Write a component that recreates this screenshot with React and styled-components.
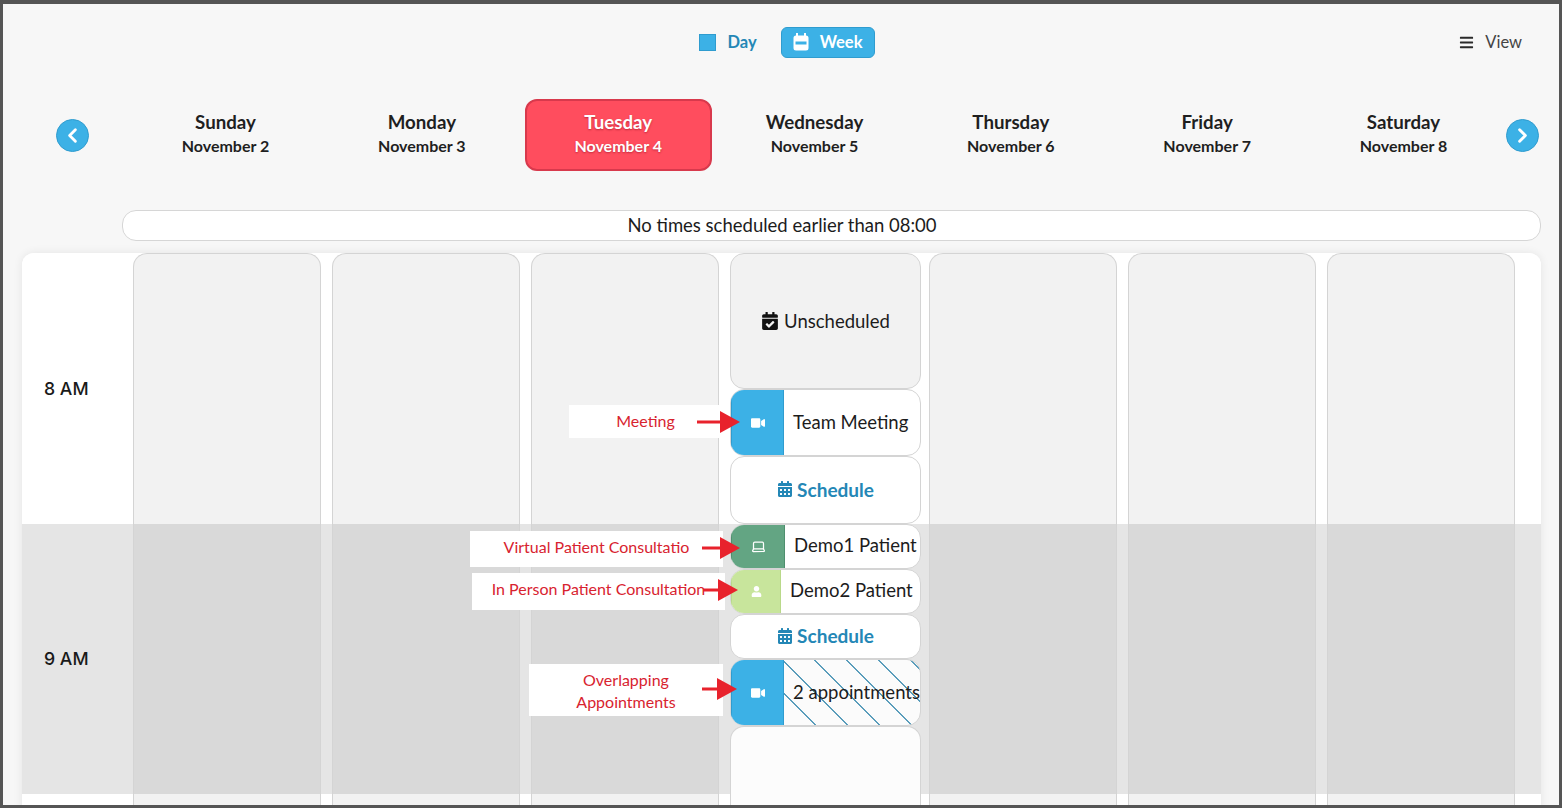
import React from 'react'
import styled, { createGlobalStyle } from 'styled-components'
import { FaCalendarAlt, FaCalendarCheck, FaVideo, FaUser, FaBars } from 'react-icons/fa'
import { ChevronLeft, ChevronRight, Laptop } from 'lucide-react'

const blue = '#3cb1e6'
const blueEdge = '#2f9ccf'
const link = '#2487b6'
const sans = '"Lato", "Noto Sans", sans-serif'

const GlobalStyle = createGlobalStyle`
  html, body { margin: 0; padding: 0; background: #f7f7f7; }
  body { font-family: ${sans}; color: #1c1c1c; overflow: hidden; }
  * { box-sizing: border-box; }
`

const Frame = styled.div`
  position: relative;
  width: 1562px;
  height: 808px;
  border: solid #555;
  border-width: 4px 3px 3px;
  background: #f7f7f7;
  overflow: hidden;
`

const Toolbar = styled.div`
  display: grid;
  grid-template-columns: 1fr auto 1fr;
  align-items: center;
  height: 31px;
  margin-top: 23px;
  padding: 0 37px 0 49px;
`

const Modes = styled.div`
  grid-column: 2;
  display: flex;
  align-items: center;
  gap: 24px;
`

const DayMode = styled.div`
  display: flex;
  align-items: center;
  gap: 11px;
  padding-bottom: 1px;
  font-size: 16.5px;
  font-weight: 700;
  color: ${link};
`

const DaySquare = styled.span`
  width: 17px;
  height: 17px;
  background: ${blue};
  border: 1px solid ${blueEdge};
`

const WeekMode = styled.div`
  display: flex;
  align-items: center;
  justify-content: center;
  gap: 11px;
  width: 94px;
  height: 31px;
  padding-bottom: 1px;
  font-size: 16.5px;
  font-weight: 700;
  color: #fff;
  background: ${blue};
  border: 1px solid ${blueEdge};
  border-radius: 6px;
`

const ViewMenu = styled.div`
  justify-self: end;
  display: flex;
  align-items: center;
  gap: 11px;
  padding-bottom: 1px;
  font-size: 16.5px;
  color: #444;

  svg { color: #2a2a2a; }
`

const WeekStrip = styled.div`
  display: flex;
  align-items: center;
  height: 72px;
  margin-top: 41px;
  padding: 0 20px 0 53px;
`

const ArrowButton = styled.div`
  flex: none;
  display: flex;
  align-items: center;
  justify-content: center;
  width: 33px;
  height: 33px;
  color: #fff;
  background: ${blue};
  border: 1px solid ${blueEdge};
  border-radius: 50%;
`

const Days = styled.div`
  flex: 1;
  display: grid;
  grid-template-columns: repeat(7, 1fr);
  column-gap: 9.3px;
  margin: 0 9px 0 43px;
`

const DayButton = styled.div`
  display: flex;
  flex-direction: column;
  align-items: center;
  justify-content: center;
  height: 72px;
  padding-bottom: 2px;
  border-radius: 12px;
  border: 2px solid ${(p) => (p.$active ? '#d8394c' : 'transparent')};
  background: ${(p) => (p.$active ? '#ff4d5e' : 'transparent')};
  color: ${(p) => (p.$active ? '#fff' : '#1f1f1f')};
  text-shadow: ${(p) => (p.$active ? '0 1px 2px rgba(120,0,20,.45)' : 'none')};
`

const DayName = styled.div`
  font-size: 18.7px;
  font-weight: 700;
  line-height: 24px;
`

const DayDate = styled.div`
  font-size: 16px;
  font-weight: 700;
  line-height: 24px;
`

const Notice = styled.div`
  display: flex;
  align-items: center;
  justify-content: center;
  height: 31px;
  margin: 39px 18px 0 119px;
  padding: 0 99px 2px 0;
  font-size: 18.5px;
  background: #fff;
  border: 1px solid #d6d6d6;
  border-radius: 14px;
`

const Schedule = styled.div`
  margin: 12px 18px 0 19px;
  background: #fff;
  border-radius: 12px 12px 0 0;
  box-shadow: 0 0 10px rgba(0, 0, 0, 0.08);
`

const Row = styled.div`
  display: flex;
  height: ${(p) => p.$height}px;
  background: ${(p) => (p.$shaded ? '#e5e5e5' : '#fff')};
  border-radius: ${(p) => (p.$first ? '12px 12px 0 0' : '0')};
`

const TimeLabel = styled.div`
  flex: none;
  display: flex;
  align-items: center;
  width: 111px;
  padding: 0 0 ${(p) => p.$lift || 0}px 22px;
  font-family: "Inter", sans-serif;
  font-size: 17.7px;
  font-weight: 500;
  color: #1a1a1a;
`

const Cells = styled.div`
  display: grid;
  grid-template-columns: repeat(7, 188px);
  column-gap: 11px;
`

const Cell = styled.div`
  border: 1px solid #d4d4d4;
  border-width: ${(p) => (p.$first ? '1px 1px 0' : '0 1px')};
  border-radius: ${(p) => (p.$first ? '14px 14px 0 0' : '0')};
  background: ${(p) => (p.$shaded ? '#d9d9d9' : '#f2f2f2')};
`

const SlotStack = styled.div`
  display: flex;
  flex-direction: column;
  width: 191px;
  height: 100%;
`

const Slot = styled.div`
  display: flex;
  align-items: center;
  justify-content: center;
  gap: 5px;
  height: ${(p) => p.$height}px;
  font-size: 18.5px;
  background: ${(p) => p.$bg || '#fff'};
  border: 1px solid #d4d4d4;
  border-radius: 14px;
`

const ScheduleSlot = styled(Slot)`
  gap: 4px;
  padding-bottom: 2px;
  font-size: 19px;
  font-weight: 700;
  color: ${link};
`

// open at the bottom, it runs on into the next hour
const OpenSlot = styled.div`
  height: ${(p) => p.$height}px;
  background: #fcfcfc;
  border: 1px solid #d4d4d4;
  border-width: ${(p) => (p.$start ? '1px 1px 0' : '0 1px')};
  border-radius: ${(p) => (p.$start ? '14px 14px 0 0' : '0')};
`

const hatch = `repeating-linear-gradient(45deg,
  #fbfbfb 0 13.7px, #5a9dbb 13.7px 15px, #fbfbfb 15px 22.63px)`

const Appointment = styled.div`
  display: flex;
  align-items: stretch;
  height: ${(p) => p.$height}px;
  background: ${(p) => (p.$hatched ? hatch : '#fff')};
  border: 1px solid #d4d4d4;
  border-radius: 14px;
  overflow: hidden;
  font-size: 18.5px;
`

const TypeBadge = styled.div`
  flex: none;
  display: flex;
  align-items: center;
  justify-content: center;
  width: ${(p) => p.$width}px;
  margin: -1px 0;
  color: #fff;
  background: ${(p) => p.$color};
  border: 1px solid ${(p) => p.$edge};
`

const AppointmentName = styled.div`
  display: flex;
  align-items: center;
  padding: 0 0 ${(p) => p.$lift ?? 2}px 9px;
  white-space: nowrap;
  color: #1c1c1c;
`

const Callout = styled.div`
  position: absolute;
  left: ${(p) => p.$x - 3}px;
  top: ${(p) => p.$y - 4}px;
  display: flex;
  align-items: center;
  justify-content: center;
  width: ${(p) => p.$w}px;
  height: ${(p) => p.$h}px;
  padding: ${(p) => p.$drop || 0}px 0 ${(p) => p.$lift || 0}px;
  font-size: 16px;
  line-height: 22px;
  text-align: center;
  white-space: pre-line;
  color: #d8232f;
  background: #fff;
`

const ArrowMark = styled.svg`
  position: absolute;
  left: ${(p) => p.$x - 3}px;
  top: ${(p) => p.$y - 15}px;
`

const Arrow = ({ x, tip, y }) => {
  const w = tip - x
  return (
    <ArrowMark $x={x} $y={y} width={w} height={22} viewBox={`0 0 ${w} 22`}>
      <rect x="0" y="9.5" width={w - 16} height="3" fill="#e8222c" />
      <polygon points={`${w - 20},0 ${w},11 ${w - 20},22`} fill="#e8222c" />
    </ArrowMark>
  )
}

const dayList = [
  ['Sunday', 'November 2'],
  ['Monday', 'November 3'],
  ['Tuesday', 'November 4', true],
  ['Wednesday', 'November 5'],
  ['Thursday', 'November 6'],
  ['Friday', 'November 7'],
  ['Saturday', 'November 8'],
]

const WeekIcon = () => (
  <svg width="16" height="18" viewBox="0 0 16 18" fill="none">
    <path d="M4 0.5v3M12 0.5v3" stroke="#fff" strokeWidth="2" strokeLinecap="round" />
    <path d="M3 2.5h10a2.5 2.5 0 0 1 2.5 2.5v10a2.5 2.5 0 0 1-2.5 2.5H3A2.5 2.5 0 0 1 .5 15V5A2.5 2.5 0 0 1 3 2.5z" fill="#fff" />
    <rect x="2.5" y="8.5" width="11" height="3" fill={blue} />
  </svg>
)

const EmptyCells = ({ first, shaded, children }) => (
  <Cells>
    {[0, 1, 2].map((i) => <Cell key={i} $first={first} $shaded={shaded} />)}
    {children}
    {[4, 5, 6].map((i) => <Cell key={i} $first={first} $shaded={shaded} />)}
  </Cells>
)

const ScheduleLink = ({ height }) => (
  <ScheduleSlot $height={height}>
    <FaCalendarAlt size={16} />
    Schedule
  </ScheduleSlot>
)

export default function App() {
  return (
    <>
      <GlobalStyle />
      <Frame>
        <Toolbar>
          <Modes>
            <DayMode><DaySquare />Day</DayMode>
            <WeekMode><WeekIcon />Week</WeekMode>
          </Modes>
          <ViewMenu><FaBars size={15} />View</ViewMenu>
        </Toolbar>

        <WeekStrip>
          <ArrowButton><ChevronLeft size={23} strokeWidth={3} /></ArrowButton>
          <Days>
            {dayList.map(([name, date, active]) => (
              <DayButton key={name} $active={active}>
                <DayName>{name}</DayName>
                <DayDate>{date}</DayDate>
              </DayButton>
            ))}
          </Days>
          <ArrowButton><ChevronRight size={23} strokeWidth={3} /></ArrowButton>
        </WeekStrip>

        <Notice>No times scheduled earlier than 08:00</Notice>

        <Schedule>
          <Row $height={271} $first>
            <TimeLabel>8 AM</TimeLabel>
            <EmptyCells first>
              <SlotStack>
                <Slot $height={136} $bg="#f2f2f2">
                  <FaCalendarCheck size={18} color="#111" />
                  Unscheduled
                </Slot>
                <Appointment $height={67}>
                  <TypeBadge $width={53} $color={blue} $edge={blueEdge}><FaVideo size={14} /></TypeBadge>
                  <AppointmentName>Team Meeting</AppointmentName>
                </Appointment>
                <ScheduleLink height={68} />
              </SlotStack>
            </EmptyCells>
          </Row>
          <Row $height={270} $shaded>
            <TimeLabel $lift={2}>9 AM</TimeLabel>
            <EmptyCells shaded>
              <SlotStack>
                <Appointment $height={45}>
                  <TypeBadge $width={54} $color="#63a583" $edge="#4f8f6e"><Laptop size={15} /></TypeBadge>
                  <AppointmentName $lift={4}>Demo1 Patient</AppointmentName>
                </Appointment>
                <Appointment $height={45}>
                  <TypeBadge $width={50} $color="#c8e59c" $edge="#b9d98a"><FaUser size={11} /></TypeBadge>
                  <AppointmentName $lift={4}>Demo2 Patient</AppointmentName>
                </Appointment>
                <ScheduleLink height={45} />
                <Appointment $height={67} $hatched>
                  <TypeBadge $width={53} $color={blue} $edge={blueEdge}><FaVideo size={14} /></TypeBadge>
                  <AppointmentName>2 appointments</AppointmentName>
                </Appointment>
                <OpenSlot $height={68} $start />
              </SlotStack>
            </EmptyCells>
          </Row>
          <Row $height={20}>
            <TimeLabel />
            <EmptyCells>
              <SlotStack>
                <OpenSlot $height={20} />
              </SlotStack>
            </EmptyCells>
          </Row>
        </Schedule>

        <Callout $x={569} $y={405} $w={153} $h={33} $lift={2}>Meeting</Callout>
        <Callout $x={470} $y={531} $w={253} $h={36} $lift={4}>Virtual Patient Consultatio</Callout>
        <Callout $x={472} $y={573} $w={253} $h={37} $lift={5}>In Person Patient Consultation</Callout>
        <Callout $x={529} $y={664} $w={194} $h={52} $drop={2}>{'Overlapping\nAppointments'}</Callout>
        <Arrow x={697} tip={740} y={422} />
        <Arrow x={702} tip={740} y={548} />
        <Arrow x={703} tip={738} y={590} />
        <Arrow x={702} tip={737} y={689} />
      </Frame>
    </>
  )
}
